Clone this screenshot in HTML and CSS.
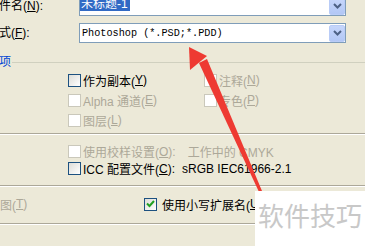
FILE: index.html
```html
<!DOCTYPE html>
<html lang="zh-CN">
<head>
    <meta charset="UTF-8">
    <title>存储为</title>
    <link rel="stylesheet" href="styles.css">
</head>
<body>
    <div class="dlg">
        <div class="field">
            <span class="lbl">文件名(<u>N</u>):</span>
            <div class="combo">
                <span class="sel">未标题-1</span>
                <span class="btn"><svg width="9" height="6" viewBox="0 0 9 6"><path d="M1 1 L4.5 4.5 L8 1" fill="none" stroke="#4D6185" stroke-width="2"/></svg></span>
            </div>
        </div>
        <div class="field">
            <span class="lbl">格式(<u>F</u>):</span>
            <div class="combo">
                <span class="mono">Photoshop (*.PSD;*.PDD)</span>
                <span class="btn"><svg width="9" height="6" viewBox="0 0 9 6"><path d="M1 1 L4.5 4.5 L8 1" fill="none" stroke="#4D6185" stroke-width="2"/></svg></span>
            </div>
        </div>

        <div class="legend"><span>存储选项</span></div>
        <div class="opts">
            <label class="chk"><span class="box"></span>作为副本(<u>Y</u>)</label>
            <label class="chk off"><span class="box"></span>注释(<u>N</u>)</label>
            <label class="chk off"><span class="box"></span>Alpha 通道(<u>E</u>)</label>
            <label class="chk off"><span class="box"></span>专色(<u>P</u>)</label>
            <label class="chk off"><span class="box"></span>图层(<u>L</u>)</label>
        </div>
        <div class="sep"></div>
        <div class="color">
            <div class="chk off"><span class="box"></span>使用校样设置(<u>O</u>):<span class="val proof">工作中的 CMYK</span></div>
            <div class="chk"><span class="box"></span>ICC 配置文件(<u>C</u>):<span class="val icc">sRGB IEC61966-2.1</span></div>
        </div>
        <div class="sep sep-mid"></div>
        <div class="bottom">
            <div class="chk off"><span class="box"></span>缩览图(<u>T</u>)</div>
            <div class="chk"><span class="box on"><svg width="9" height="8" viewBox="0 0 9 8"><path d="M1 3.5 L3.5 6 L8 1" fill="none" stroke="#21A121" stroke-width="2"/></svg></span>使用小写扩展名(<u>U</u>)</div>
        </div>
        <div class="sep sep-end"></div>
    </div>

    <svg class="arrow" width="365" height="246" viewBox="0 0 365 246">
        <polygon points="199,63 207,59 262,191 259,192" fill="#EE3A32"/>
        <polygon points="189,47 207,56 190,70" fill="#EE3A32"/>
    </svg>

    <div class="mark">软件技巧</div>
</body>
</html>
```

FILE: styles.css
```css
body {
    margin: 0;
    height: 246px;
    overflow: hidden;
    position: relative;
    display: flow-root;
    background-color: #ECE9D8;
    font-family: "Liberation Sans", "Noto Sans CJK SC", sans-serif;
    font-size: 12px;
    color: #000;
}
.dlg {
    margin-left: -45px;
    margin-top: -4px;
    width: 440px;
}
.field {
    display: flex;
    align-items: center;
    height: 20px;
    padding-left: 32px;
}
.field + .field {
    margin-top: 7px;
}
.lbl {
    width: 92px;
    line-height: 14px;
}
.combo {
    width: 267px;
    height: 20px;
    box-sizing: border-box;
    border: 1px solid #7F9DB9;
    background-color: #fff;
    display: flex;
    align-items: center;
    justify-content: space-between;
}
.sel {
    background-color: #316AC5;
    color: #fff;
    line-height: 13px;
    padding: 0 2px 0 1px;
    margin-top: -4px;
}
.mono {
    font-family: "Liberation Mono", monospace;
    font-size: 10.2px;
    padding-left: 2px;
}
.btn {
    width: 16px;
    height: 17px;
    box-sizing: border-box;
    border: 1px solid #B9CCF7;
    border-radius: 2px;
    background: linear-gradient(#C6D6FB, #B2C7F5);
    display: flex;
    align-items: center;
    justify-content: center;
}
.legend {
    display: flex;
    align-items: center;
    margin-top: 12px;
    padding-left: 8px;
    color: #0046D5;
    line-height: 14px;
}
.legend::after {
    content: "";
    flex: 1;
    border-top: 1px solid #D0D0BF;
    margin-left: 1px;
}
.opts {
    display: grid;
    grid-template-columns: 136px auto;
    grid-auto-rows: 20px;
    padding-left: 113px;
    margin-top: 1px;
}
.chk {
    display: flex;
    align-items: center;
    white-space: nowrap;
}
.box {
    width: 13px;
    height: 13px;
    box-sizing: border-box;
    border: 1px solid #1C5180;
    background: linear-gradient(135deg, #DCDCD7, #fff);
    margin-right: 2px;
    display: flex;
    align-items: center;
    justify-content: center;
}
.off {
    color: #ACA899;
}
.off .box {
    border-color: #CAC8BB;
    background: #fff;
}
.sep {
    border-top: 1px solid #ACA899;
    border-bottom: 1px solid #fff;
    margin-top: 3px;
}
.sep-mid {
    margin-top: 8px;
}
.sep-end {
    margin-top: 9px;
}
.color {
    display: grid;
    grid-auto-rows: 17px;
    padding-left: 113px;
    margin-top: 8px;
}
.val.proof {
    margin-left: 12px;
}
.val.icc {
    margin-left: 7px;
}
.bottom {
    display: grid;
    grid-template-columns: 186px auto;
    height: 20px;
    padding-left: 3px;
    margin-top: 7px;
}
.bottom .box {
    margin-right: 5px;
}
.arrow {
    position: absolute;
    left: 0;
    top: 0;
}
.mark {
    position: absolute;
    left: 255px;
    top: 191px;
    right: 0;
    bottom: 0;
    background-color: #fff;
    color: #C8C8C8;
    font-family: "Noto Sans CJK SC", sans-serif;
    font-size: 26px;
    line-height: 30px;
    padding: 9px 0 0 3px;
}
```
